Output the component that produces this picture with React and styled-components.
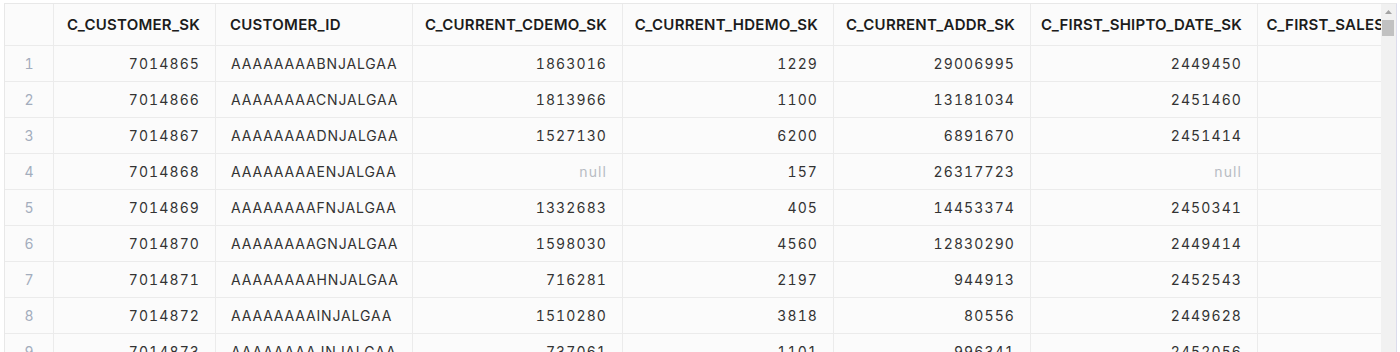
import React from 'react';
import styled, { createGlobalStyle } from 'styled-components';

const GlobalStyle = createGlobalStyle`
  html, body { margin: 0; padding: 0; overflow: hidden; background: #ffffff; }
  body { font-family: Inter, "Noto Sans", sans-serif; }
`;

const Page = styled.div`
  padding: 3px 3px 0 4px;
`;

const Frame = styled.div`
  display: flex;
  height: 420px;
  border: 1px solid #e8e8e8;
  border-right-color: #dcdcec;
  background: #fbfbfb;
`;

const Viewport = styled.div`
  flex: 1;
  min-width: 0;
  overflow: hidden;
`;

const Track = styled.div`
  width: 15px;
  flex: none;
  display: flex;
  flex-direction: column;
  align-items: center;
  background: #f1f1f1;
`;

const ArrowButton = styled.div`
  width: 15px;
  height: 15px;
  display: flex;
  align-items: center;
  justify-content: center;
`;

const Thumb = styled.div`
  width: 12px;
  height: 16px;
  margin: 1px 1px 0 0;
  background: #c1c1c1;
`;

const Grid = styled.div`
  display: grid;
  grid-template-columns: ${(p) => p.$cols};
  width: max-content;
`;

const HeadCell = styled.div`
  box-sizing: border-box;
  height: 42px;
  padding: 0 15px 0 14px;
  display: flex;
  align-items: center;
  justify-content: ${(p) => (p.$align === 'right' ? 'flex-end' : 'flex-start')};
  border-right: 1px solid #ebebeb;
  border-bottom: 1px solid #ebebeb;
  font-size: 15px;
  font-weight: 600;
  letter-spacing: 0.25px;
  color: #1c1c1c;
  white-space: nowrap;
  overflow: hidden;
`;

const Cell = styled.div`
  box-sizing: border-box;
  height: 36px;
  padding: 0 15px;
  display: flex;
  align-items: center;
  justify-content: ${(p) => (p.$align === 'right' ? 'flex-end' : 'flex-start')};
  border-right: 1px solid #ebebeb;
  border-bottom: 1px solid #ebebeb;
  font-size: 14px;
  font-variant-numeric: tabular-nums;
  letter-spacing: ${(p) => (p.$align === 'right' ? '1.1px' : '0.85px')};
  color: ${(p) => (p.$null ? '#b8bcc3' : '#333333')};
  white-space: nowrap;
  overflow: hidden;
`;

const RowNum = styled(Cell)`
  padding: 0;
  justify-content: center;
  color: #a3adbd;
  letter-spacing: 0;
`;

const columns = [
  { key: 'sk', name: 'C_CUSTOMER_SK', width: 162, align: 'right' },
  { key: 'id', name: 'CUSTOMER_ID', width: 197, align: 'left' },
  { key: 'cdemo', name: 'C_CURRENT_CDEMO_SK', width: 210, align: 'right' },
  { key: 'hdemo', name: 'C_CURRENT_HDEMO_SK', width: 211, align: 'right' },
  { key: 'addr', name: 'C_CURRENT_ADDR_SK', width: 197, align: 'right' },
  { key: 'ship', name: 'C_FIRST_SHIPTO_DATE_SK', width: 227, align: 'right' },
  { key: 'sales', name: 'C_FIRST_SALES_DATE_SK', width: 218, align: 'right' },
];

const rows = [
  ['7014865', 'AAAAAAAABNJALGAA', '1863016', '1229', '29006995', '2449450', '2449420'],
  ['7014866', 'AAAAAAAACNJALGAA', '1813966', '1100', '13181034', '2451460', '2451430'],
  ['7014867', 'AAAAAAAADNJALGAA', '1527130', '6200', '6891670', '2451414', '2451384'],
  ['7014868', 'AAAAAAAAENJALGAA', null, '157', '26317723', null, null],
  ['7014869', 'AAAAAAAAFNJALGAA', '1332683', '405', '14453374', '2450341', '2450311'],
  ['7014870', 'AAAAAAAAGNJALGAA', '1598030', '4560', '12830290', '2449414', '2449384'],
  ['7014871', 'AAAAAAAAHNJALGAA', '716281', '2197', '944913', '2452543', '2452513'],
  ['7014872', 'AAAAAAAAINJALGAA', '1510280', '3818', '80556', '2449628', '2449598'],
  ['7014873', 'AAAAAAAAJNJALGAA', '737061', '1101', '996341', '2452056', '2452026'],
];

const colTemplate = ['49px', ...columns.map((c) => `${c.width}px`)].join(' ');

export default function App() {
  return (
    <>
      <GlobalStyle />
      <Page>
        <Frame>
          <Viewport>
            <Grid $cols={colTemplate}>
              <HeadCell />
              {columns.map((c) => (
                <HeadCell key={c.key} $align={c.align}>
                  {c.name}
                </HeadCell>
              ))}
              {rows.map((r, i) => (
                <React.Fragment key={i}>
                  <RowNum>{i + 1}</RowNum>
                  {columns.map((c, j) => (
                    <Cell key={c.key} $align={c.align} $null={r[j] === null}>
                      {r[j] === null ? 'null' : r[j]}
                    </Cell>
                  ))}
                </React.Fragment>
              ))}
            </Grid>
          </Viewport>
          <Track>
            <ArrowButton>
              <svg width="7" height="4" viewBox="0 0 7 4">
                <path d="M0 4 L3.5 0 L7 4 Z" fill="#a3a3a3" />
              </svg>
            </ArrowButton>
            <Thumb />
          </Track>
        </Frame>
      </Page>
    </>
  );
}
